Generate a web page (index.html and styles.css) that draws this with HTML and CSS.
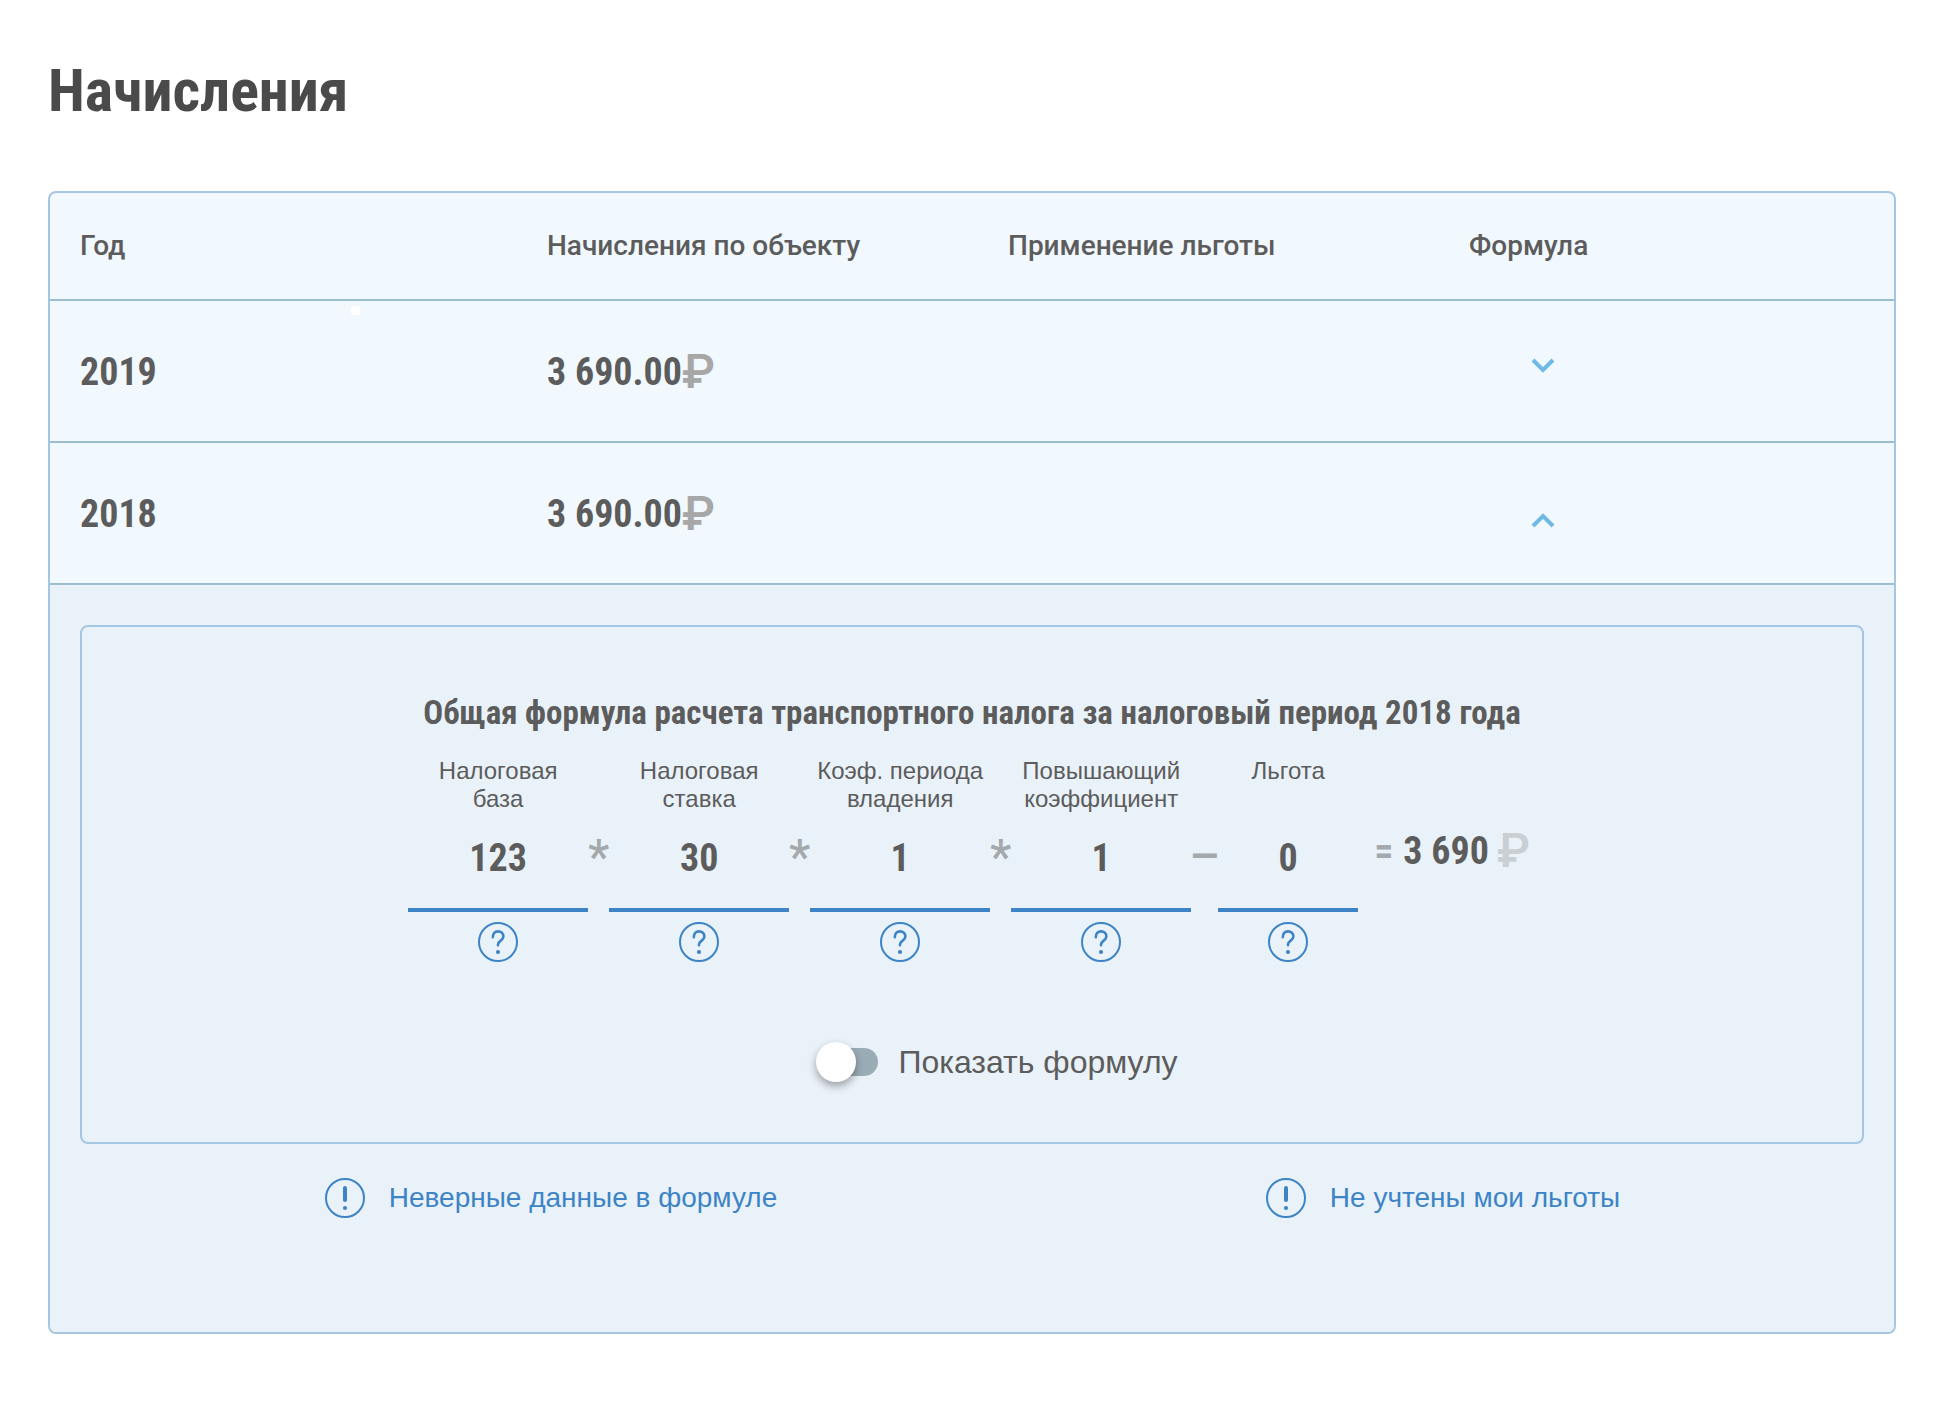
FILE: index.html
```html
<!DOCTYPE html>
<html lang="ru">
<head>
<meta charset="utf-8">
<meta name="viewport" content="width=device-width, initial-scale=1">
<title>Начисления</title>
<link rel="stylesheet" href="styles.css">
</head>
<body>
<svg class="sprite" aria-hidden="true">
  <symbol id="chevron" viewBox="0 0 24 24"><path d="M2 2 12 12 22 2" fill="none" stroke="currentColor" stroke-width="4"/></symbol>
  <symbol id="question" viewBox="0 0 40 40">
    <circle cx="20" cy="20" r="19" fill="none" stroke="currentColor" stroke-width="2"/>
    <path d="M14.8 15.2C14.8 11.4 16.9 9.4 20 9.4S25.4 11.4 25.4 14.6C25.4 18.6 20 18.6 20 22.6V23.2" fill="none" stroke="currentColor" stroke-width="2.6" stroke-linecap="round"/>
    <circle cx="20" cy="30" r="2.1" fill="currentColor"/>
  </symbol>
  <symbol id="alert" viewBox="0 0 40 40">
    <circle cx="20" cy="20" r="19" fill="none" stroke="currentColor" stroke-width="2"/>
    <path d="M20 10V22" fill="none" stroke="currentColor" stroke-width="4" stroke-linecap="round"/>
    <circle cx="20" cy="30" r="2.1" fill="currentColor"/>
  </symbol>
</svg>
<main class="page">
  <h1 class="page-title">Начисления</h1>
  <div class="card">
    <table class="charges">
      <thead>
        <tr>
          <th scope="col">Год</th>
          <th scope="col">Начисления по объекту</th>
          <th scope="col">Применение льготы</th>
          <th scope="col">Формула</th>
        </tr>
      </thead>
      <tbody>
        <tr class="charge-row">
          <td class="marked">2019</td>
          <td><span class="amount">3 690.00<span class="ruble">₽</span></span></td>
          <td></td>
          <td><button class="expander" type="button" aria-expanded="false" aria-label="Показать формулу за 2019 год"><svg><use href="#chevron"/></svg></button></td>
        </tr>
        <tr class="charge-row">
          <td>2018</td>
          <td><span class="amount">3 690.00<span class="ruble">₽</span></span></td>
          <td></td>
          <td><button class="expander open" type="button" aria-expanded="true" aria-label="Скрыть формулу за 2018 год"><svg><use href="#chevron"/></svg></button></td>
        </tr>
        <tr class="details-row">
          <td colspan="4">
            <section class="formula-box">
              <h2 class="formula-title">Общая формула расчета транспортного налога за налоговый период 2018 года</h2>
              <div class="formula">
                <div class="term">
                  <div class="term-label">Налоговая<br>база</div>
                  <div class="term-value">123</div>
                  <button class="help" type="button" aria-label="Налоговая база: справка"><svg><use href="#question"/></svg></button>
                </div>
                <span class="operator">*</span>
                <div class="term">
                  <div class="term-label">Налоговая<br>ставка</div>
                  <div class="term-value">30</div>
                  <button class="help" type="button" aria-label="Налоговая ставка: справка"><svg><use href="#question"/></svg></button>
                </div>
                <span class="operator">*</span>
                <div class="term">
                  <div class="term-label">Коэф. периода<br>владения</div>
                  <div class="term-value">1</div>
                  <button class="help" type="button" aria-label="Коэффициент периода владения: справка"><svg><use href="#question"/></svg></button>
                </div>
                <span class="operator">*</span>
                <div class="term">
                  <div class="term-label">Повышающий<br>коэффициент</div>
                  <div class="term-value">1</div>
                  <button class="help" type="button" aria-label="Повышающий коэффициент: справка"><svg><use href="#question"/></svg></button>
                </div>
                <span class="operator minus">–</span>
                <div class="term short">
                  <div class="term-label">Льгота</div>
                  <div class="term-value">0</div>
                  <button class="help" type="button" aria-label="Льгота: справка"><svg><use href="#question"/></svg></button>
                </div>
                <div class="result"><span class="equals">=</span><span>3 690</span><span class="ruble pale">₽</span></div>
              </div>
              <label class="toggle"><input type="checkbox" role="switch">Показать формулу</label>
            </section>
            <div class="links">
              <a class="report" href="#formula"><svg><use href="#alert"/></svg>Неверные данные в формуле</a>
              <a class="report" href="#benefits"><svg><use href="#alert"/></svg>Не учтены мои льготы</a>
            </div>
          </td>
        </tr>
      </tbody>
    </table>
  </div>
</main>
</body>
</html>
```
FILE: styles.css
```css
:root {
  --text: #5c5c5c;
  --blue: #3d84c6;
  --line: #a4c6e2;
  --divider: #9dbdd0;
  --condensed: "Roboto Condensed", Roboto, sans-serif;
  --body: "Liberation Sans", Arial, sans-serif;
}

* { box-sizing: border-box; }

body {
  margin: 0;
  background: #fff;
  color: var(--text);
  font-family: var(--body);
}

button {
  display: block;
  padding: 0;
  border: 0;
  background: none;
  cursor: pointer;
}

.sprite { position: absolute; width: 0; height: 0; }

.page { padding: 51px 48px 48px; }

.page-title {
  margin: 0 0 60px;
  color: #4a4a4a;
  font: 700 60px/80px var(--condensed);
}

.card {
  overflow: hidden;
  border: 2px solid var(--line);
  border-radius: 8px;
  background: #f1f8fe;
}

.charges {
  width: 100%;
  table-layout: fixed;
  border-collapse: separate;
  border-spacing: 0;
}

.charges th,
.charge-row td {
  padding: 0 0 0 36px;
  border-bottom: 2px solid var(--divider);
  text-align: left;
  vertical-align: middle;
}

.charges th:first-child,
.charge-row td:first-child { padding-left: 30px; }

.charges th {
  height: 108px;
  font: 500 28px/36px Roboto, sans-serif;
}

.charge-row td {
  height: 142px;
  padding-top: 2px;
  font: 700 38px/48px var(--condensed);
}

/* small light mark under the header line */
.marked { position: relative; }
.marked::after {
  content: "";
  position: absolute;
  top: 5px;
  left: 301px;
  width: 9px;
  height: 9px;
  border-radius: 2px;
  background: #fff;
}

.amount { display: flex; align-items: center; }

.ruble {
  color: #a7a7a7;
  font: 500 48px/48px Roboto, sans-serif;
}
.ruble.pale { margin-left: 8px; color: #c9cfd3; }

.expander { margin-left: 62px; color: #6fb9e6; }
.expander svg { display: block; width: 24px; height: 28px; }
.expander svg { padding-bottom: 4px; }
.expander.open svg { transform: rotate(180deg); }

.details-row td {
  padding: 40px 30px 114px;
  background: #eaf2f9;
}

.formula-box {
  display: flex;
  flex-direction: column;
  align-items: center;
  padding: 62px 0 60px;
  border: 2px solid var(--line);
  border-radius: 8px;
}

.formula-title {
  margin: 0 0 20px;
  font: 700 33px/48px var(--condensed);
}

.formula {
  display: flex;
  align-items: flex-start;
  padding-right: 6px;
}

.term {
  display: flex;
  flex-direction: column;
  align-items: center;
  width: 180px;
}
.term.short { width: 140px; }

.term-label {
  height: 56px;
  font-size: 24px;
  line-height: 28px;
  text-align: center;
  white-space: nowrap;
}

.term-value {
  align-self: stretch;
  margin: 21px 0 10px;
  padding-bottom: 26px;
  border-bottom: 4px solid var(--blue);
  font: 700 38px/48px var(--condensed);
  text-align: center;
}

.help { color: var(--blue); }
.help svg,
.report svg { display: block; width: 40px; height: 40px; }

.operator {
  display: flex;
  justify-content: center;
  width: 21px;
  margin-top: 76px;
  color: #a3a9ac;
  font: 500 48px/48px Roboto, sans-serif;
}
.operator.minus { width: 27px; }

.result {
  display: flex;
  align-items: center;
  margin: 70px 0 0 16px;
  font: 700 38px/48px var(--condensed);
}
.equals { margin-right: 10px; color: #a3a9ac; }

.toggle {
  display: flex;
  align-items: center;
  gap: 20px;
  margin-top: 80px;
  padding-left: 56px;
  font-size: 32px;
  line-height: 40px;
  cursor: pointer;
}

.toggle input {
  position: relative;
  width: 56px;
  height: 28px;
  margin: 0;
  border-radius: 14px;
  background: #9aadb7;
  appearance: none;
  cursor: pointer;
}
.toggle input::before {
  content: "";
  position: absolute;
  top: -6px;
  left: -6px;
  width: 40px;
  height: 40px;
  border-radius: 50%;
  background: #fff;
  box-shadow: 0 4px 8px rgba(0, 0, 0, .35);
}
.toggle input:checked::before { left: 22px; }

.links {
  display: grid;
  grid-template-columns: 1fr 1fr;
  justify-items: center;
  margin-top: 34px;
}

.report {
  display: flex;
  align-items: center;
  gap: 24px;
  padding-left: 50px;
  color: var(--blue);
  font-size: 28px;
  line-height: 40px;
  text-decoration: none;
}
```
